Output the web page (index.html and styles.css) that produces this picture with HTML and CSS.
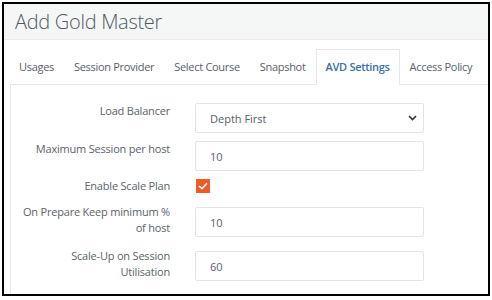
FILE: index.html
```html
<!DOCTYPE html>
<html lang="en">
<head>
    <meta charset="UTF-8">
    <meta name="viewport" content="width=device-width, initial-scale=1.0">
    <title>Add Gold Master</title>
    <link rel="stylesheet" href="styles.css">
</head>
<body>
    <div class="modal">
        <div class="modal-header">
            <h2>Add Gold Master</h2>
        </div>

        <div class="modal-body">
            <ul class="nav-tabs">
                <li>Usages</li>
                <li>Session Provider</li>
                <li>Select Course</li>
                <li>Snapshot</li>
                <li class="active">AVD Settings</li>
                <li>Access Policy</li>
            </ul>

            <div class="tab-content">
                <div class="form-row">
                    <label>Load Balancer</label>
                    <div class="select-control">
                        <span>Depth First</span>
                        <svg width="9" height="6" viewBox="0 0 9 6"><path d="M1 1 L4.5 4.5 L8 1" fill="none" stroke="#333" stroke-width="1.6"/></svg>
                    </div>
                </div>

                <div class="form-row">
                    <label>Maximum Session per host</label>
                    <input type="text" class="form-control" value="10">
                </div>

                <div class="form-row check-row">
                    <label>Enable Scale Plan</label>
                    <span class="checkbox">
                        <svg width="10" height="8" viewBox="0 0 10 8"><path d="M1 4 L4 6.6 L9 1.2" fill="none" stroke="#fff" stroke-width="1.6"/></svg>
                    </span>
                </div>

                <div class="form-row tall-row">
                    <label>On Prepare Keep minimum % of host</label>
                    <input type="text" class="form-control" value="10">
                </div>

                <div class="form-row tall-row">
                    <label>Scale-Up on Session<br>Utilisation</label>
                    <input type="text" class="form-control" value="60">
                </div>
            </div>
        </div>
    </div>
</body>
</html>
```

FILE: styles.css
```css
body {
    margin: 0;
    padding: 0;
    background-color: white;
    font-family: 'Open Sans', 'Noto Sans', sans-serif;
}
.modal {
    box-sizing: border-box;
    width: 488px;
    height: 294px;
    margin: 2px 0 0 2px;
    border: 2px solid #000;
    overflow: hidden;
    background-color: white;
}
.modal-header {
    background-color: #f5f7f7;
    border-bottom: 1px solid #e8ecec;
    height: 35px;
    padding-left: 11px;
}
.modal-header h2 {
    margin: 0;
    font-size: 20px;
    font-weight: 300;
    letter-spacing: -0.3px;
    line-height: 35px;
    color: #505a5f;
}
.modal-body {
    padding: 9px 0 0 6px;
    width: 600px;
}
.nav-tabs {
    display: flex;
    list-style: none;
    margin: 0;
    padding: 0;
    border-bottom: 1px solid #e3e7e7;
}
.nav-tabs li {
    padding: 0 9px;
    height: 34px;
    line-height: 34px;
    font-size: 11px;
    letter-spacing: -0.3px;
    color: #56606a;
    border: 1px solid transparent;
    border-bottom: none;
    margin-bottom: -1px;
}
.nav-tabs li:first-child {
    margin-left: -1px;
}
.nav-tabs li.active {
    color: #3a6ea8;
    font-weight: 600;
    background-color: white;
    border-color: #e3e7e7;
    height: 35px;
}
.tab-content {
    border-left: 1px solid #e3e7e7;
    padding: 18px 0 0 0;
    height: 220px;
}
.form-row {
    display: flex;
    align-items: flex-start;
    margin-bottom: 8px;
}
.form-row label {
    box-sizing: border-box;
    flex: none;
    width: 184px;
    padding: 0 25px 0 9px;
    text-align: right;
    font-size: 11px;
    letter-spacing: -0.2px;
    line-height: 16px;
    color: #5a636b;
}
.form-control,
.select-control {
    box-sizing: border-box;
    width: 229px;
    height: 30px;
    border: 1px solid #dfe5e7;
    border-radius: 2px;
    padding: 0 14px;
    font-family: 'Open Sans', 'Noto Sans', sans-serif;
    font-size: 11px;
    color: #56606a;
    margin: 0;
}
.form-control:focus {
    outline: none;
}
.select-control {
    display: flex;
    align-items: center;
    justify-content: space-between;
    padding-right: 6px;
}
.check-row {
    margin-top: -1px;
    margin-bottom: 10px;
}
.checkbox {
    width: 14px;
    height: 14px;
    margin: 1px 0 0 1px;
    background-color: #f05a28;
    display: flex;
    align-items: center;
    justify-content: center;
}
.tall-row {
    margin-bottom: 11px;
}
.tall-row .form-control {
    margin-top: 3px;
}
```
